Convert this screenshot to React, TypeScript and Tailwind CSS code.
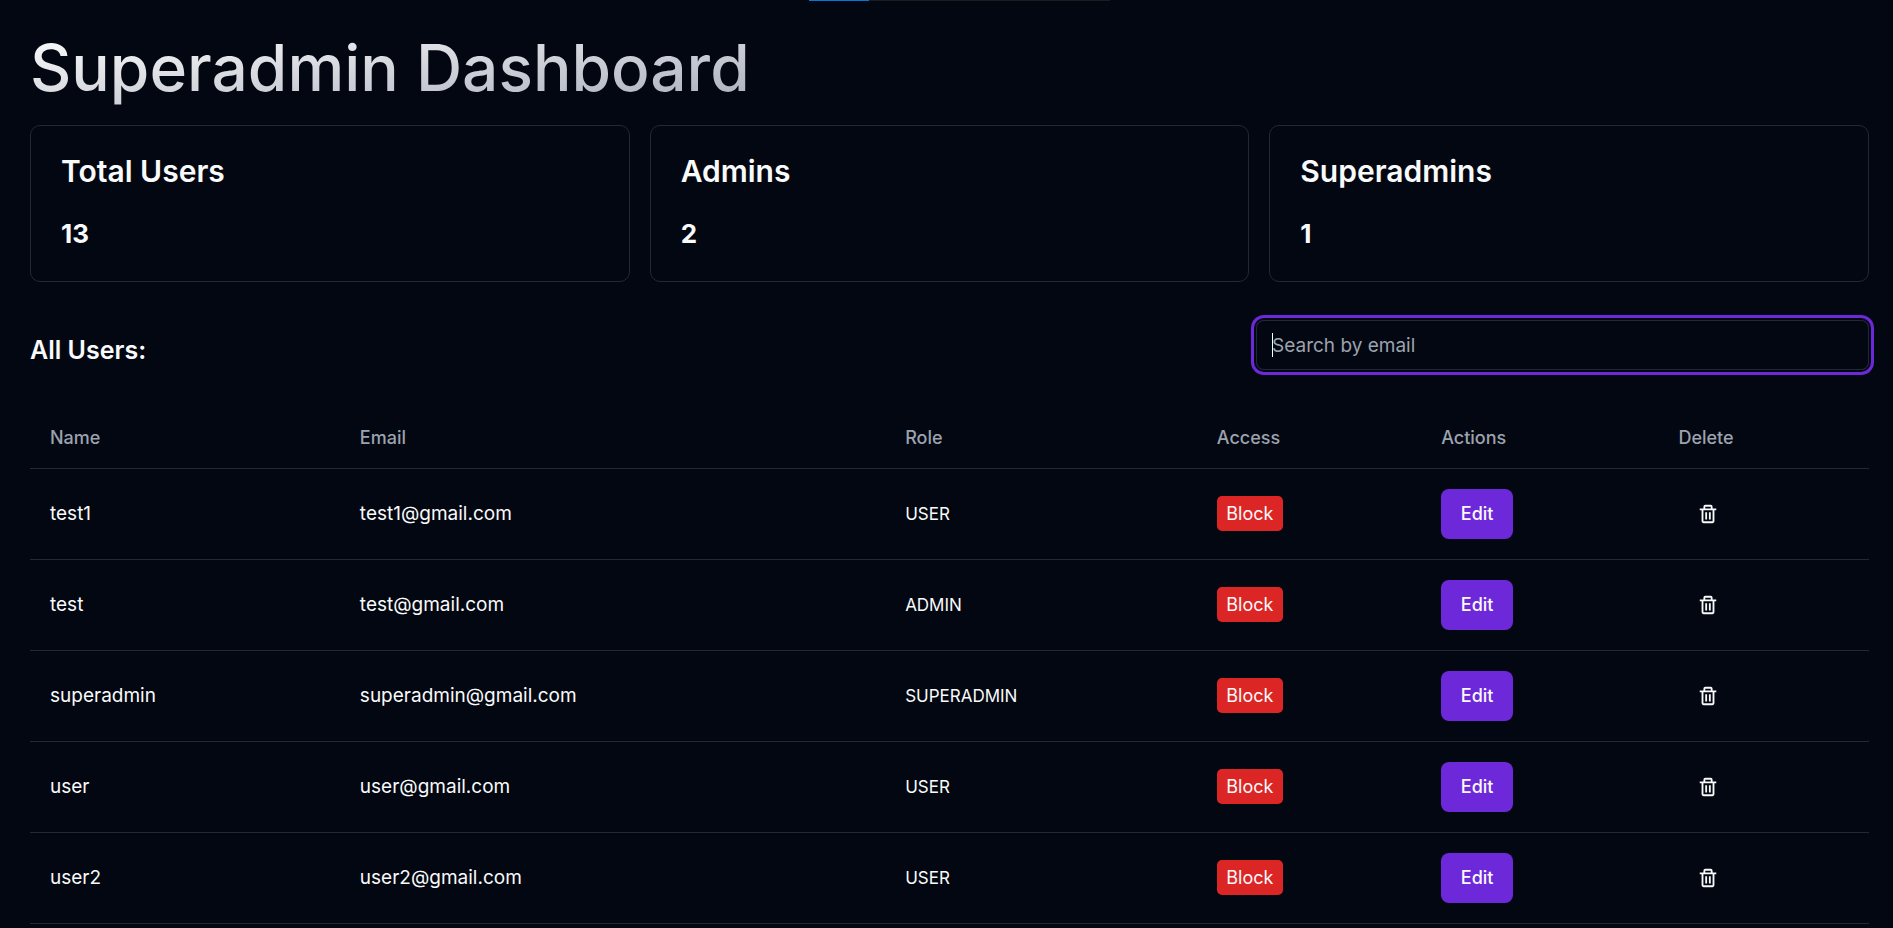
import { BiTrash } from "react-icons/bi";

type Role = "USER" | "ADMIN" | "SUPERADMIN";

interface User {
  name: string;
  email: string;
  role: Role;
}

const stats = [
  { title: "Total Users", value: 13 },
  { title: "Admins", value: 2 },
  { title: "Superadmins", value: 1 },
];

const users: User[] = [
  { name: "test1", email: "test1@gmail.com", role: "USER" },
  { name: "test", email: "test@gmail.com", role: "ADMIN" },
  { name: "superadmin", email: "superadmin@gmail.com", role: "SUPERADMIN" },
  { name: "user", email: "user@gmail.com", role: "USER" },
  { name: "user2", email: "user2@gmail.com", role: "USER" },
];

const columns = [
  { label: "Name", width: "w-[16.85%]" },
  { label: "Email", width: "w-[29.65%]" },
  { label: "Role", width: "w-[16.95%]" },
  { label: "Access", width: "w-[12.2%]" },
  { label: "Actions", width: "w-[12.9%]" },
  { label: "Delete", width: "w-[11.45%]" },
];

function StatCard({ title, value }: { title: string; value: number }) {
  return (
    <section className="rounded-[10px] border border-[#1f2937] p-[30px]">
      <h3 className="text-[30px] leading-[30px] font-semibold">{title}</h3>
      <p className="mt-[30px] text-[26px] leading-[35px] font-bold">{value}</p>
    </section>
  );
}

function SearchBox() {
  return (
    <div className="relative w-1/3">
      <input
        type="text"
        aria-label="Search by email"
        placeholder="Search by email"
        className="block h-[50px] w-full rounded-[8px] border border-[#1f2937] bg-transparent px-[15px] text-[19px] caret-transparent ring-[3px] ring-[#6d28d9] ring-offset-2 ring-offset-[#030711] outline-none placeholder:text-[#9ca3af]"
      />
      <span className="pointer-events-none absolute top-[13px] left-4 h-6 w-px bg-white" />
    </div>
  );
}

function UserRow({ user }: { user: User }) {
  return (
    <tr className="h-[91px] border-b border-[#1f2937]">
      <td className="px-5 pt-0.5 text-[19px]">{user.name}</td>
      <td className="px-5 pt-0.5 text-[19px]">{user.email}</td>
      <td className="px-5 pt-0.5 text-[17px]">{user.role}</td>
      <td className="px-5">
        <button type="button" className="block h-[35px] w-[66px] rounded-[5px] bg-[#dc2626]">
          Block
        </button>
      </td>
      <td className="px-5">
        <button type="button" className="block h-[50px] w-[72px] rounded-[8px] bg-[#6d28d9] font-medium">
          Edit
        </button>
      </td>
      <td className="px-5">
        <button
          type="button"
          aria-label={`Delete ${user.name}`}
          className="flex h-[50px] w-[60px] items-center justify-center"
        >
          <BiTrash size={22} />
        </button>
      </td>
    </tr>
  );
}

export default function App() {
  return (
    <div className="relative min-h-screen bg-[#030711] pt-[30px] pr-6 pl-[30px] font-['Inter',sans-serif] text-[18px] text-gray-50">
      <div className="absolute top-0 left-[809px] h-px w-[301px] bg-[#1c1c1c]">
        <div className="h-full w-1/5 bg-[#0078d4]" />
      </div>

      <h1 className="mb-5 w-fit bg-linear-to-br from-white to-[#a9aeba] bg-clip-text text-[64px] leading-[75px] font-medium text-transparent">
        Superadmin Dashboard
      </h1>

      <div className="grid grid-cols-3 gap-5">
        {stats.map((stat) => (
          <StatCard key={stat.title} title={stat.title} value={stat.value} />
        ))}
      </div>

      <div className="mt-[38px] flex items-end justify-between">
        <h2 className="text-[25px] leading-10 font-semibold">All Users:</h2>
        <SearchBox />
      </div>

      <table className="mt-[37px] w-full table-fixed border-collapse text-left">
        <thead>
          <tr className="h-[61px] border-b border-[#1f2937]">
            {columns.map((column) => (
              <th key={column.label} scope="col" className={`px-5 font-medium text-[#9ca3af] ${column.width}`}>
                {column.label}
              </th>
            ))}
          </tr>
        </thead>
        <tbody>
          {users.map((user) => (
            <UserRow key={user.email} user={user} />
          ))}
        </tbody>
      </table>
    </div>
  );
}
